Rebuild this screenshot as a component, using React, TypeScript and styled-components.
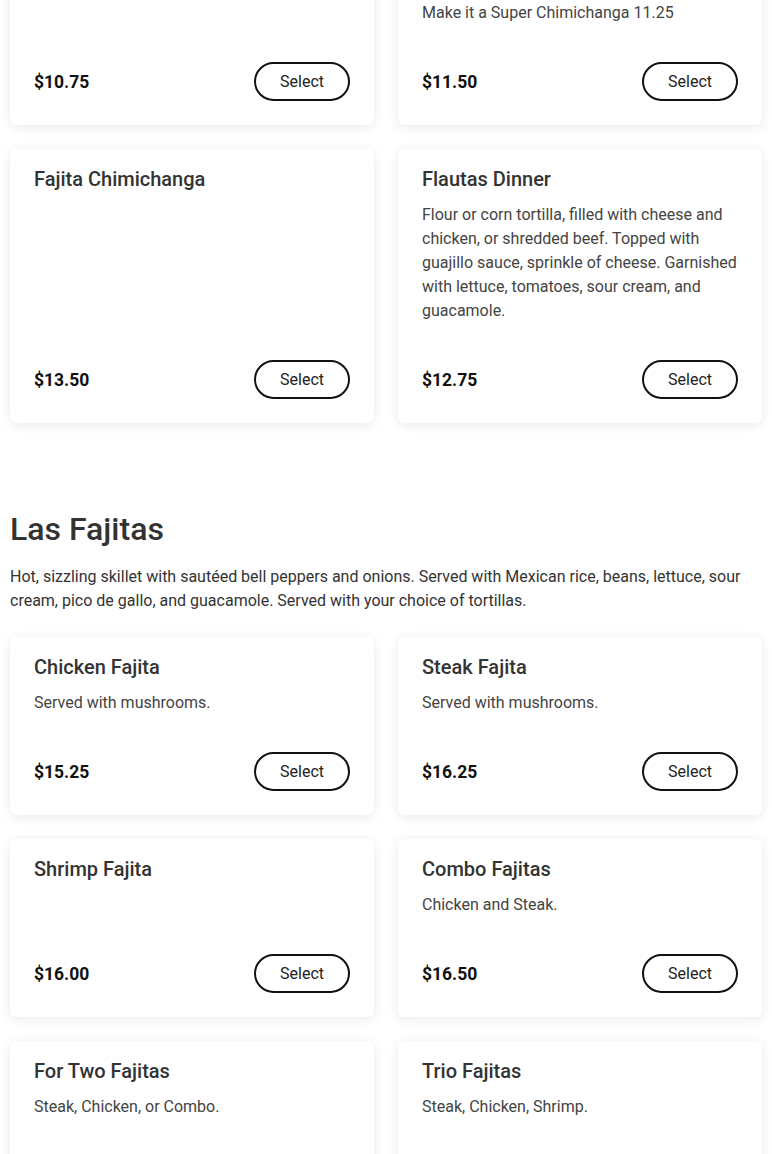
import React from "react";
import styled, { createGlobalStyle } from "styled-components";

const GlobalStyle = createGlobalStyle`
  html, body {
    margin: 0;
    padding: 0;
    background: #fff;
    font-family: Roboto, "Liberation Sans", Arial, sans-serif;
    color: #333;
  }
  * { box-sizing: border-box; }
`;

type Item = {
  name: string;
  desc?: string[];
  price: string;
};

type Section = {
  title?: string;
  intro?: string;
  items: Item[];
};

const sections: Section[] = [
  {
    items: [
      { name: "Chimichanga", price: "$10.75" },
      {
        name: "Chimichanga Dinner",
        desc: ["Chicken or shredded beef.", "Make it a Super Chimichanga 11.25"],
        price: "$11.50",
      },
      { name: "Fajita Chimichanga", price: "$13.50" },
      {
        name: "Flautas Dinner",
        desc: [
          "Flour or corn tortilla, filled with cheese and chicken, or shredded beef. Topped with guajillo sauce, sprinkle of cheese. Garnished with lettuce, tomatoes, sour cream, and guacamole.",
        ],
        price: "$12.75",
      },
    ],
  },
  {
    title: "Las Fajitas",
    intro:
      "Hot, sizzling skillet with sautéed bell peppers and onions. Served with Mexican rice, beans, lettuce, sour cream, pico de gallo, and guacamole. Served with your choice of tortillas.",
    items: [
      { name: "Chicken Fajita", desc: ["Served with mushrooms."], price: "$15.25" },
      { name: "Steak Fajita", desc: ["Served with mushrooms."], price: "$16.25" },
      { name: "Shrimp Fajita", price: "$16.00" },
      { name: "Combo Fajitas", desc: ["Chicken and Steak."], price: "$16.50" },
      { name: "For Two Fajitas", desc: ["Steak, Chicken, or Combo."], price: "$29.50" },
      { name: "Trio Fajitas", desc: ["Steak, Chicken, Shrimp."], price: "$18.50" },
    ],
  },
];

// page is shown scrolled: the first row starts above the viewport
const Page = styled.main`
  padding: 0 10px 40px;
  margin-top: -77px;
`;

const MenuSection = styled.section`
  & + & {
    margin-top: 87px;
  }
`;

const Heading = styled.h2`
  margin: 0 0 17px;
  font-size: 32px;
  line-height: 38px;
  font-weight: 500;
  color: #333;
`;

const Intro = styled.p`
  margin: 0 0 24px;
  font-size: 16px;
  line-height: 24px;
  color: #333;
`;

const Grid = styled.div`
  display: grid;
  grid-template-columns: 1fr 1fr;
  gap: 24px;
`;

const Card = styled.article`
  display: flex;
  flex-direction: column;
  background: #fff;
  border-radius: 6px;
  padding: 18px 24px 24px;
  box-shadow: 0 2px 12px rgba(0, 0, 0, 0.09);
`;

const Name = styled.h3`
  margin: 0 0 12px;
  font-size: 20px;
  line-height: 24px;
  font-weight: 500;
  color: #333;
`;

const Desc = styled.p`
  margin: 0;
  font-size: 16px;
  line-height: 24px;
  color: #444;
`;

const Footer = styled.div`
  display: flex;
  align-items: center;
  justify-content: space-between;
  margin-top: auto;
  padding-top: 37px;
`;

const Price = styled.span`
  font-size: 17.5px;
  font-weight: 700;
  color: #111;
`;

const SelectButton = styled.button`
  font-family: inherit;
  font-size: 16px;
  line-height: 19px;
  color: #222;
  background: #fff;
  border: 2px solid #111;
  border-radius: 20px;
  padding: 8px 24px;
  cursor: pointer;
  &:hover { background: #f4f4f4; }
`;

const MenuCard: React.FC<{ item: Item }> = ({ item }) => (
  <Card>
    <Name>{item.name}</Name>
    {item.desc && (
      <Desc>
        {item.desc.map((line, i) => (
          <React.Fragment key={i}>
            {i > 0 && <br />}
            {line}
          </React.Fragment>
        ))}
      </Desc>
    )}
    <Footer>
      <Price>{item.price}</Price>
      <SelectButton>Select</SelectButton>
    </Footer>
  </Card>
);

const App: React.FC = () => (
  <>
    <GlobalStyle />
    <Page>
      {sections.map((s, i) => (
        <MenuSection key={i}>
          {s.title && <Heading>{s.title}</Heading>}
          {s.intro && <Intro>{s.intro}</Intro>}
          <Grid>
            {s.items.map((item) => (
              <MenuCard key={item.name} item={item} />
            ))}
          </Grid>
        </MenuSection>
      ))}
    </Page>
  </>
);

export default App;
